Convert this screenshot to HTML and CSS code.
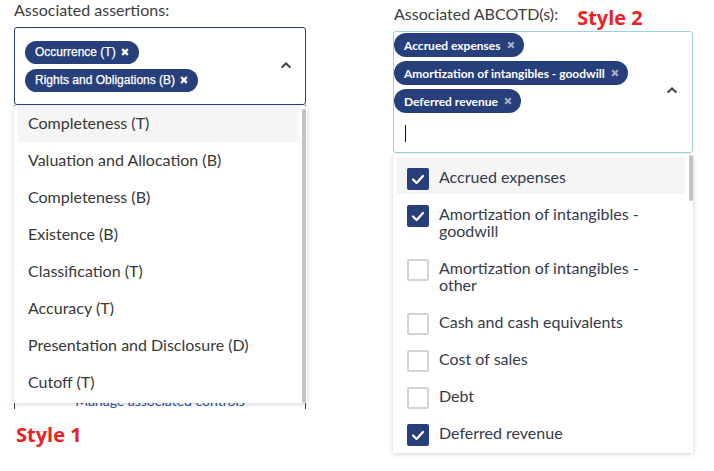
FILE: index.html
```html
<!DOCTYPE html>
<html lang="en">
<head>
<meta charset="utf-8">
<title>Multi-select styles</title>
<link rel="stylesheet" href="styles.css">
</head>
<body>
<div class="page">
  <section class="col col-left">
    <div class="label label-1">Associated assertions:</div>
    <div class="field">
      <div class="select select-1">
        <div class="chips chips-1">
          <span class="chip chip-a">Occurrence (T)<svg class="x" viewBox="0 0 8 8"><path d="M1.2 1.2L6.8 6.8M6.8 1.2L1.2 6.8"/></svg></span>
          <span class="chip chip-a">Rights and Obligations (B)<svg class="x" viewBox="0 0 8 8"><path d="M1.2 1.2L6.8 6.8M6.8 1.2L1.2 6.8"/></svg></span>
        </div>
        <svg class="caret" viewBox="0 0 10 6"><path d="M1.2 5L5 1.4L8.8 5"/></svg>
      </div>
      <div class="under">
        <span class="manage">Manage associated controls</span>
      </div>
      <div class="menu menu-1">
        <ul class="list list-1">
          <li class="opt opt-1 hover">Completeness (T)</li>
          <li class="opt opt-1">Valuation and Allocation (B)</li>
          <li class="opt opt-1">Completeness (B)</li>
          <li class="opt opt-1">Existence (B)</li>
          <li class="opt opt-1">Classification (T)</li>
          <li class="opt opt-1">Accuracy (T)</li>
          <li class="opt opt-1">Presentation and Disclosure (D)</li>
          <li class="opt opt-1">Cutoff (T)</li>
        </ul>
        <div class="track track-1"><div class="thumb thumb-1"></div></div>
      </div>
    </div>
    <div class="style-tag tag-1">Style 1</div>
  </section>

  <section class="col col-right">
    <div class="head">
      <span class="label label-2">Associated ABCOTD(s):</span>
      <span class="style-tag tag-2">Style 2</span>
    </div>
    <div class="field">
      <div class="select select-2">
        <div class="chips chips-2">
          <span class="chip chip-b">Accrued expenses<svg class="x" viewBox="0 0 8 8"><path d="M1.2 1.2L6.8 6.8M6.8 1.2L1.2 6.8"/></svg></span>
          <span class="chip chip-b">Amortization of intangibles - goodwill<svg class="x" viewBox="0 0 8 8"><path d="M1.2 1.2L6.8 6.8M6.8 1.2L1.2 6.8"/></svg></span>
          <span class="chip chip-b">Deferred revenue<svg class="x" viewBox="0 0 8 8"><path d="M1.2 1.2L6.8 6.8M6.8 1.2L1.2 6.8"/></svg></span>
          <div class="input-row"><span class="cursor"></span></div>
        </div>
        <svg class="caret" viewBox="0 0 10 6"><path d="M1.2 5L5 1.4L8.8 5"/></svg>
      </div>
      <div class="menu menu-2">
        <ul class="list list-2">
          <li class="opt opt-2 hover"><span class="box checked"><svg viewBox="0 0 22 22"><path d="M6 11.5L9.6 15L16 8"/></svg></span><span class="txt">Accrued expenses</span></li>
          <li class="opt opt-2"><span class="box checked"><svg viewBox="0 0 22 22"><path d="M6 11.5L9.6 15L16 8"/></svg></span><span class="txt">Amortization of intangibles - goodwill</span></li>
          <li class="opt opt-2"><span class="box"></span><span class="txt">Amortization of intangibles - other</span></li>
          <li class="opt opt-2"><span class="box"></span><span class="txt">Cash and cash equivalents</span></li>
          <li class="opt opt-2"><span class="box"></span><span class="txt">Cost of sales</span></li>
          <li class="opt opt-2"><span class="box"></span><span class="txt">Debt</span></li>
          <li class="opt opt-2"><span class="box checked"><svg viewBox="0 0 22 22"><path d="M6 11.5L9.6 15L16 8"/></svg></span><span class="txt">Deferred revenue</span></li>
        </ul>
        <div class="track track-2"><div class="thumb thumb-2"></div></div>
      </div>
    </div>
  </section>
</div>
</body>
</html>
```

FILE: styles.css
```css
* { box-sizing: border-box; }

html, body {
  margin: 0;
  padding: 0;
  background: #ffffff;
}

body {
  font-family: Lato, "Open Sans", Arial, sans-serif;
  color: #3a3a3a;
  width: 714px;
  height: 471px;
  overflow: hidden;
}

.page {
  display: flex;
  align-items: flex-start;
  padding-left: 14px;
  gap: 87px;
}

.col-left { width: 292px; }
.col-right { width: 300px; }

.label {
  font-size: 16px;
  line-height: 18px;
  color: #3d3d3d;
}

.label-1 {
  display: block;
  padding-top: 1px;
}

.field { position: relative; }

/* ---------- select boxes ---------- */
.select {
  display: flex;
  align-items: center;
  background: #fff;
  border-radius: 3px;
}

.select-1 {
  margin-top: 8px;
  height: 78px;
  border: 1px solid #2a3e7b;
  padding: 0 14px 0 10px;
}

.select-2 {
  margin-top: 1px;
  height: 122px;
  border: 1px solid #9fd0e2;
  padding: 1px 15px 2px 0;
}

.chips {
  flex: 1;
  display: flex;
  flex-wrap: wrap;
  align-items: flex-start;
}

.chips-1 {
  flex-direction: column;
  gap: 5px;
}

.chips-2 {
  row-gap: 4px;
  align-self: flex-start;
}

.chip {
  display: inline-flex;
  align-items: center;
  background: #273f7a;
  color: #fff;
  white-space: nowrap;
}

.chip-a {
  height: 23px;
  border-radius: 12px;
  padding: 0 10px 0 10px;
  font-family: "Liberation Sans", Arial, sans-serif;
  font-size: 12px;
  gap: 5px;
  -webkit-text-stroke: 0.25px #fff;
}

.chip-a .x {
  width: 8px;
  height: 8px;
  stroke: #fff;
  stroke-width: 2.4;
  fill: none;
}

.chip-b {
  height: 24px;
  border-radius: 12px;
  padding: 0 9px 0 10px;
  font-size: 12px;
  font-weight: 700;
  gap: 6px;
}

.chip-b .x {
  width: 8px;
  height: 8px;
  stroke: #a7aec0;
  stroke-width: 2.2;
  fill: none;
}

.input-row {
  width: 100%;
  height: 33px;
  padding: 8px 0 0 11px;
}

.cursor {
  display: block;
  width: 1px;
  height: 17px;
  background: #111;
}

.caret {
  width: 10px;
  height: 6px;
  flex: none;
  margin-bottom: 3px;
  stroke: #3d4356;
  stroke-width: 2;
  fill: none;
  stroke-linecap: round;
}

/* ---------- content under menu 1 ---------- */
.under {
  height: 304px;
  border-left: 1px solid #2a3e7b;
  border-right: 1px solid #2a3e7b;
  display: flex;
  align-items: flex-end;
  justify-content: center;
}

.manage {
  font-size: 14px;
  line-height: 14px;
  margin-bottom: 1px;
  color: #2b4a9c;
}

/* ---------- menus ---------- */
.menu {
  position: absolute;
  left: 0;
  display: flex;
  background: #fff;
  box-shadow: 0 1px 5px rgba(0, 0, 0, 0.18);
  overflow: hidden;
}

.menu-1 {
  top: 79px;
  width: 293px;
  height: 297px;
}

.menu-2 {
  top: 123px;
  width: 300px;
  height: 299px;
}

.list {
  flex: 1;
  list-style: none;
  margin: 0;
}

.list-1 { padding: 1px 4px 0 4px; }
.list-2 { padding: 3px 4px 0 4px; }

.opt {
  font-size: 16px;
  line-height: 17px;
}

.opt-1 {
  padding: 7px 10px 11px 10px;
  margin-bottom: 2px;
  color: #383838;
}

.opt-2 {
  display: flex;
  align-items: flex-start;
  gap: 10px;
  padding: 11px 10px 9px 10px;
  color: #343a4c;
}

.hover { background: #f5f5f5; }

.box {
  flex: none;
  width: 22px;
  height: 22px;
  margin: 0 0 -5px 0;
  border: 2px solid #d3d3d3;
  border-radius: 2px;
  background: #fff;
}

.box.checked {
  border: none;
  background: #273f7a;
}

.box svg {
  display: block;
  width: 22px;
  height: 22px;
  stroke: #fff;
  stroke-width: 2.3;
  fill: none;
  stroke-linecap: round;
  stroke-linejoin: round;
}

.track {
  flex: none;
  width: 4px;
}

.track-1 { margin: 3px 1px 0 0; }
.track-2 { margin: 1px 0 0 0; }

.thumb {
  width: 4px;
  border-radius: 2px;
  background: #c2c3c8;
}

.thumb-1 { height: 294px; }
.thumb-2 { height: 46px; }

/* ---------- style tags ---------- */
.style-tag {
  font-family: "Open Sans", Lato, sans-serif;
  font-weight: 700;
  font-size: 20px;
  line-height: 24px;
  color: #ee1d26;
}

.tag-1 {
  margin-top: 14px;
  padding-left: 2px;
}

.head {
  display: flex;
  align-items: flex-start;
  height: 30px;
}

.label-2 {
  padding-top: 5px;
  padding-left: 1px;
}

.tag-2 {
  margin-top: 6px;
  margin-left: 19px;
}
```
